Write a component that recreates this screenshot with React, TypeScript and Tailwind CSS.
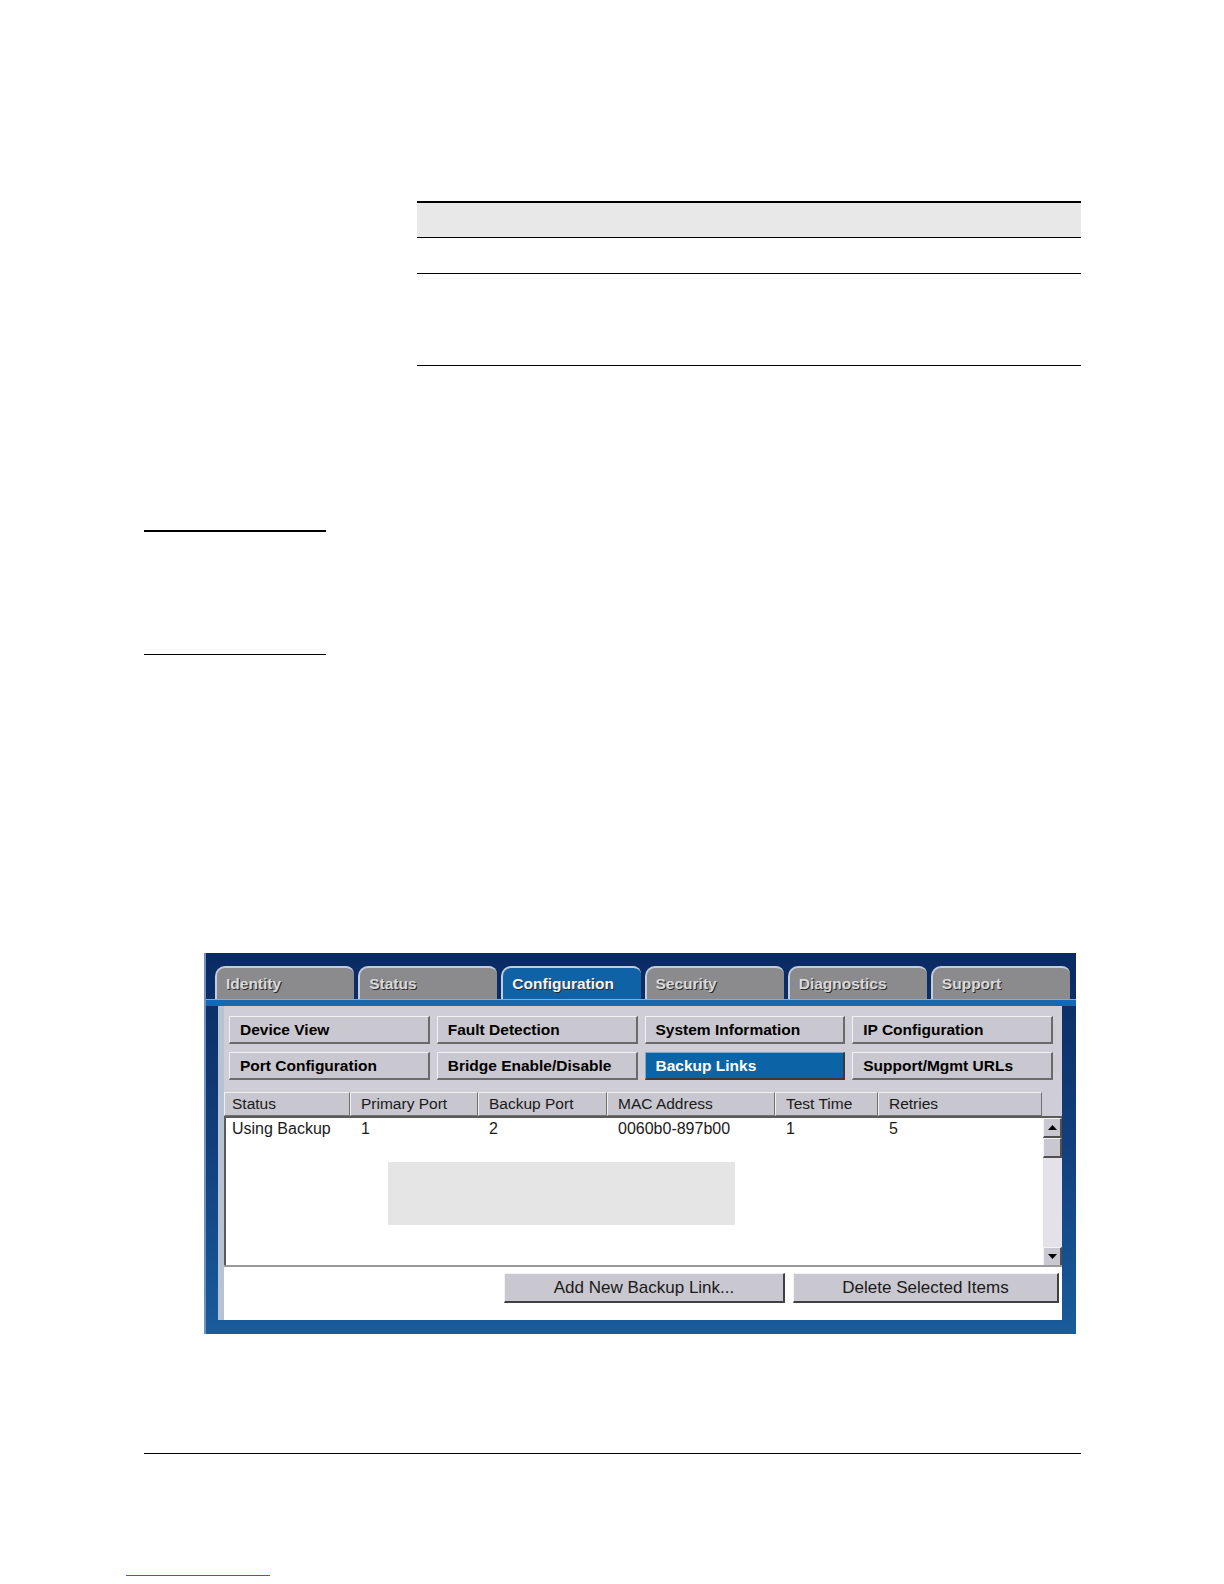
const tabs = ['Identity', 'Status', 'Configuration', 'Security', 'Diagnostics', 'Support'];

const navButtons = [
  'Device View',
  'Fault Detection',
  'System Information',
  'IP Configuration',
  'Port Configuration',
  'Bridge Enable/Disable',
  'Backup Links',
  'Support/Mgmt URLs',
];

const columns = [
  { label: 'Status', width: 'w-[126px]' },
  { label: 'Primary Port', width: 'w-[128px]' },
  { label: 'Backup Port', width: 'w-[129px]' },
  { label: 'MAC Address', width: 'w-[168px]' },
  { label: 'Test Time', width: 'w-[103px]' },
  { label: 'Retries', width: 'w-[164px]' },
];

const row = ['Using Backup', '1', '2', '0060b0-897b00', '1', '5'];

function Tab({ label, active }: { label: string; active: boolean }) {
  return (
    <div
      className={`flex h-[33px] flex-1 items-center rounded-tl-[10px] rounded-tr-[8px] border-l-2 border-t-2 border-[#c3cddb] pl-[9px] text-[15.5px] font-bold [text-shadow:1px_1px_0_#2a2a2a] ${
        active ? 'bg-[#0f62a6] text-[#f4f4f4]' : 'bg-[#8b8b8d] text-[#d9d9d9]'
      }`}
    >
      {label}
    </div>
  );
}

function NavButton({ label, active }: { label: string; active: boolean }) {
  return (
    <div
      className={`flex h-[28px] items-center border-b-2 border-l border-r-2 border-t pl-[10px] text-[15.5px] font-bold ${
        active
          ? 'border-b-[#3a3a3a] border-l-[#7ea6cf] border-r-[#3a3a3a] border-t-[#7ea6cf] bg-[#0b64a6] text-white'
          : 'border-b-[#6a6a6a] border-l-[#f2f2f2] border-r-[#6a6a6a] border-t-[#f2f2f2] bg-[#c9c7cf] text-black'
      }`}
    >
      {label}
    </div>
  );
}

function ScrollArrow({ down }: { down?: boolean }) {
  return (
    <div className="flex h-[20px] items-center justify-center border-b-2 border-l border-r-2 border-t border-b-[#505050] border-l-[#f4f4f4] border-r-[#505050] border-t-[#f4f4f4] bg-[#c9c7cf]">
      <svg width="9" height="5" viewBox="0 0 9 5">
        {down ? <polygon points="0,0 9,0 4.5,5" fill="#000" /> : <polygon points="0,5 9,5 4.5,0" fill="#000" />}
      </svg>
    </div>
  );
}

function ConfigScreen() {
  return (
    <div className="ml-[204px] flex h-[381px] w-[872px] flex-col border-l-2 border-[#6f93c0] bg-linear-to-b from-[#0a2a62] via-[#123f7c] to-[#195c9c] pt-[13px]">
      <div className="flex gap-[4px] pl-[9px] pr-[6px]">
        {tabs.map((t) => (
          <Tab key={t} label={t} active={t === 'Configuration'} />
        ))}
      </div>
      <div className="h-[7px] border-t border-[#86acd6] bg-[#1668b0]" />
      <div className="flex flex-1 flex-col pb-[14px] pl-[12px] pr-[14px]">
        <div className="flex flex-1 flex-col border-l-[6px] border-[#b7c3d3] bg-[#cfcdd5]">
          <div className="grid grid-cols-4 gap-x-[7px] gap-y-[8px] pl-[5px] pr-[9px] pt-[10px]">
            {navButtons.map((b) => (
              <NavButton key={b} label={b} active={b === 'Backup Links'} />
            ))}
          </div>
          <div className="mt-[12px] flex h-[24px]">
            {columns.map((c, i) => (
              <div
                key={c.label}
                className={`${c.width} flex items-center border-b border-l border-r border-t border-b-[#707070] border-l-[#f0f0f0] border-r-[#707070] border-t-[#f0f0f0] bg-[#c8c6ce] ${
                  i === 0 ? 'pl-[7px]' : 'pl-[10px]'
                } text-[15.5px] text-[#1a1a1a]`}
              >
                {c.label}
              </div>
            ))}
          </div>
          <div className="flex h-[149px]">
            <div className="relative flex-1 border-l-2 border-t-2 border-[#5a5a5a] bg-white">
              <div className="flex h-[21px] items-center">
                {row.map((v, i) => (
                  <div
                    key={i}
                    className={`${i === 0 ? 'w-[124px] pl-[6px]' : `${columns[i].width} pl-[11px]`} shrink-0 text-[16px] text-[#1a1a1a]`}
                  >
                    {v}
                  </div>
                ))}
              </div>
              <div className="absolute left-[162px] top-[44px] h-[63px] w-[347px] bg-[#e5e5e5]" />
            </div>
            <div className="flex w-[19px] flex-col border-t-2 border-[#5a5a5a] bg-[#e4e1e8]">
              <ScrollArrow />
              <div className="h-[20px] border-b-2 border-l border-r-2 border-t border-b-[#505050] border-l-[#f4f4f4] border-r-[#505050] border-t-[#f4f4f4] bg-[#c9c7cf]" />
              <div className="flex-1" />
              <div className="h-[18px]">
                <ScrollArrow down />
              </div>
            </div>
          </div>
          <div className="flex flex-1 justify-end gap-[8px] border-t-2 border-[#9a9a9a] bg-white pr-[3px] pt-[6px]">
            <div className="flex h-[30px] w-[281px] items-center justify-center border-b-2 border-l border-r-2 border-t border-b-[#404040] border-l-[#f2f2f2] border-r-[#404040] border-t-[#f2f2f2] bg-[#c9c7cf] text-[17px] text-[#1a1a1a]">
              Add New Backup Link...
            </div>
            <div className="flex h-[30px] w-[266px] items-center justify-center border-b-2 border-l border-r-2 border-t border-b-[#404040] border-l-[#f2f2f2] border-r-[#404040] border-t-[#f2f2f2] bg-[#c9c7cf] text-[17px] text-[#1a1a1a]">
              Delete Selected Items
            </div>
          </div>
        </div>
      </div>
    </div>
  );
}

export default function App() {
  return (
    <div className="flex h-[1584px] w-[1224px] flex-col bg-white pt-[201px] font-['Liberation_Sans',Arial,sans-serif]">
      <div className="ml-[417px] w-[664px]">
        <div className="h-[37px] border-b border-t-2 border-black bg-[#e8e8e8]" />
        <div className="h-[36px] border-b border-black" />
        <div className="h-[92px] border-b border-black" />
      </div>
      <div className="ml-[144px] mt-[164px] h-[2px] w-[182px] bg-black" />
      <div className="ml-[144px] mt-[122px] h-px w-[182px] bg-black" />
      <div className="mt-[298px]">
        <ConfigScreen />
      </div>
      <div className="ml-[144px] mt-[119px] h-px w-[937px] bg-black" />
      <div className="ml-[126px] mt-[121px] h-px w-[144px] bg-[#3b5bd6]" />
    </div>
  );
}
